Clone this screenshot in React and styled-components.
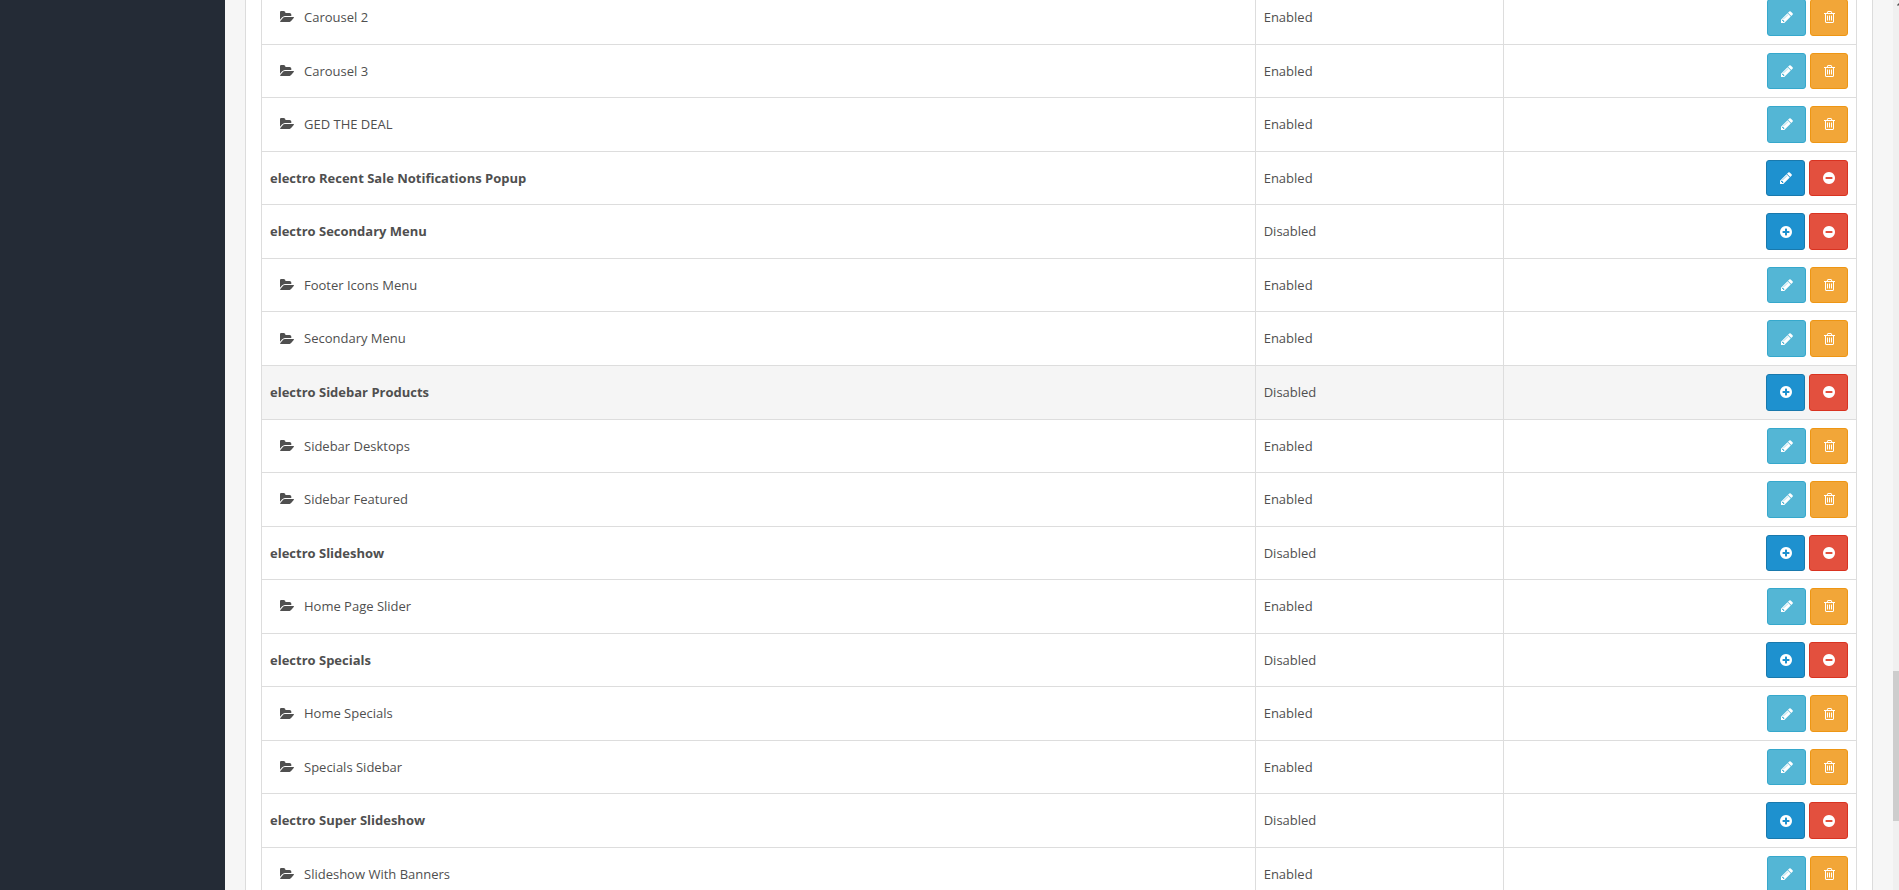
import React from 'react';
import styled, { createGlobalStyle, css } from 'styled-components';

// --- Colors and global styles ---
const colors = {
  sidebar: '#242b36',
  page: '#f6f6f6',
  panel: '#ffffff',
  border: '#dddddd',
  panelBorder: '#dcdcdc',
  text: '#4f4f4f',
  highlight: '#f5f5f5',
  track: '#f0f0f0',
  thumb: '#cdcdcd',
};

const variants = {
  primary: { background: '#1e91cf', border: '#1979ad', width: 39 },
  info: { background: '#54b6d5', border: '#36a8cc', width: 39 },
  warning: { background: '#f2a638', border: '#ee9614', width: 38 },
  danger: { background: '#e3503e', border: '#d93321', width: 39 },
};

const GlobalStyle = createGlobalStyle`
  *, *::before, *::after {
    box-sizing: border-box;
  }

  body {
    margin: 0;
    font-family: 'Open Sans', sans-serif;
    font-size: 13px;
    line-height: 1.42857;
    color: ${colors.text};
    background-color: ${colors.page};
  }
`;

const Page = styled.div`
  display: flex;
  height: 100vh;
  overflow: hidden;
`;

const Sidebar = styled.nav`
  flex: 0 0 225px;
  background-color: ${colors.sidebar};
`;

const Content = styled.main`
  flex: 1;
  min-width: 0;
  padding: 0 20px;
`;

/* the list is scrolled part of the way into its first row */
const Panel = styled.section`
  margin-top: -26px;
  padding: 15px;
  background-color: ${colors.panel};
  border: 1px solid ${colors.panelBorder};
`;

const StyledTable = styled.table`
  width: 100%;
  table-layout: fixed;
  border-collapse: collapse;
`;

const NameColumn = styled.col`
  width: 62.3%;
`;

const StatusColumn = styled.col`
  width: 15.6%;
`;

const TableRow = styled.tr`
  background-color: ${({ $active }) => ($active ? colors.highlight : 'transparent')};
`;

const TableCell = styled.td`
  padding: 8px;
  vertical-align: middle;
  border: 1px solid ${colors.border};
`;

const GroupName = styled.strong`
  font-weight: 700;
`;

const ModuleName = styled.span`
  display: flex;
  align-items: center;
  gap: 10px;
  padding-left: 10px;
`;

const Actions = styled.div`
  display: flex;
  justify-content: flex-end;
  gap: 4px;
`;

const buttonStyle = css`
  display: inline-flex;
  align-items: center;
  justify-content: center;
  width: ${({ $variant }) => variants[$variant].width}px;
  padding: 8px 0;
  font: inherit;
  color: #fff;
  text-decoration: none;
  border: 1px solid ${({ $variant }) => variants[$variant].border};
  border-radius: 3px;
  background-color: ${({ $variant }) => variants[$variant].background};
  cursor: pointer;

  /* keeps the text line height for icon-only buttons */
  &::before {
    content: '\\200b';
  }
`;

const ActionLink = styled.a`
  ${buttonStyle}
`;

const ActionButton = styled.button`
  ${buttonStyle}
`;

const Glyph = styled.svg`
  display: block;
  flex: none;
  fill: currentColor;
`;

const ScrollTrack = styled.div`
  flex: 0 0 6px;
  display: grid;
  grid-template-rows: 671fr 150fr 69fr;
  overflow: hidden;
  background-color: ${colors.track};
`;

const ScrollThumb = styled.div`
  grid-row: 2;
  background-color: ${colors.thumb};
`;

const ScrollArrow = styled.svg`
  grid-row: 1;
  fill: #505050;
`;

// --- Icons ---
const circle =
  'm320-64q0 209-103 385.5t-279.5 279.5-385.5 103-385.5-103-279.5-279.5-103-385.5 103-385.5 279.5-279.5 385.5-103 385.5 103 279.5 279.5 103 385.5z';

const icons = {
  pencil: {
    width: 12,
    viewBox: '128 0 1536 1792',
    path: 'M491 1536l91-91-235-235-91 91v107h128v128h107zm523-928q0-22-22-22-10 0-17 7l-542 542q-7 7-7 17 0 22 22 22 10 0 17-7l542-542q7-7 7-17zm-54-192l416 416-832 832h-416v-416zm683 96q0 53-37 90l-166 166-416-416 166-165q36-38 90-38 53 0 91 38l235 234q37 39 37 91z',
  },
  trash: {
    width: 11,
    viewBox: '192 0 1408 1792',
    path: 'M704 736v576q0 14-9 23t-23 9h-64q-14 0-23-9t-9-23v-576q0-14 9-23t23-9h64q14 0 23 9t9 23zm256 0v576q0 14-9 23t-23 9h-64q-14 0-23-9t-9-23v-576q0-14 9-23t23-9h64q14 0 23 9t9 23zm256 0v576q0 14-9 23t-23 9h-64q-14 0-23-9t-9-23v-576q0-14 9-23t23-9h64q14 0 23 9t9 23zm128 724v-948h-896v948q0 22 7 40.5t14.5 27 10.5 8.5h832q3 0 10.5-8.5t14.5-27 7-40.5zm-672-1076h448l-48-117q-7-9-17-11h-317q-10 2-17 11zm928 32v64q0 14-9 23t-23 9h-96v948q0 83-47 143.5t-113 60.5h-832q-66 0-113-58.5t-47-141.5v-952h-96q-14 0-23-9t-9-23v-64q0-14 9-23t23-9h309l70-167q15-37 54-63t79-26h320q40 0 79 26t54 63l70 167h309q14 0 23 9t9 23z',
  },
  plus: {
    width: 12,
    viewBox: '128 0 1536 1792',
    path: `M1344 960v-128q0-26-19-45t-45-19h-256v-256q0-26-19-45t-45-19h-128q-26 0-45 19t-19 45v256h-256q-26 0-45 19t-19 45v128q0 26 19 45t45 19h256v256q0 26 19 45t45 19h128q26 0 45-19t19-45v-256h256q26 0 45-19t19-45z${circle}`,
  },
  minus: {
    width: 12,
    viewBox: '128 0 1536 1792',
    path: `M1344 960v-128q0-26-19-45t-45-19h-768q-26 0-45 19t-19 45v128q0 26 19 45t45 19h768q26 0 45-19t19-45z${circle}`,
  },
  folder: {
    width: 14,
    viewBox: '0 0 1824 1792',
    path: 'M1815 952q0 31-31 66l-336 396q-43 51-120.5 86.5t-143.5 35.5h-1088q-34 0-60.5-13t-26.5-43q0-31 31-66l336-396q43-51 120.5-86.5t143.5-35.5h1088q34 0 60.5 13t26.5 43zm-343-344v160h-832q-94 0-197 47.5t-164 119.5l-337 396-5 6q0-4-.5-12.5t-.5-12.5v-960q0-92 66-158t158-66h320q92 0 158 66t66 158v32h544q92 0 158 66t66 158z',
  },
};

function Icon({ name }) {
  const { width, viewBox, path } = icons[name];
  return (
    <Glyph width={width} height={14} viewBox={viewBox} aria-hidden="true">
      <path d={path} />
    </Glyph>
  );
}

// --- Data ---
const modules = [
  { name: 'Carousel 2', status: 'Enabled' },
  { name: 'Carousel 3', status: 'Enabled' },
  { name: 'GED THE DEAL', status: 'Enabled' },
  { name: 'electro Recent Sale Notifications Popup', status: 'Enabled', group: true, action: 'pencil' },
  { name: 'electro Secondary Menu', status: 'Disabled', group: true, action: 'plus' },
  { name: 'Footer Icons Menu', status: 'Enabled' },
  { name: 'Secondary Menu', status: 'Enabled' },
  { name: 'electro Sidebar Products', status: 'Disabled', group: true, action: 'plus', active: true },
  { name: 'Sidebar Desktops', status: 'Enabled' },
  { name: 'Sidebar Featured', status: 'Enabled' },
  { name: 'electro Slideshow', status: 'Disabled', group: true, action: 'plus' },
  { name: 'Home Page Slider', status: 'Enabled' },
  { name: 'electro Specials', status: 'Disabled', group: true, action: 'plus' },
  { name: 'Home Specials', status: 'Enabled' },
  { name: 'Specials Sidebar', status: 'Enabled' },
  { name: 'electro Super Slideshow', status: 'Disabled', group: true, action: 'plus' },
  { name: 'Slideshow With Banners', status: 'Enabled' },
];

function ModuleRow({ module }) {
  const { name, status, group, action, active } = module;

  return (
    <TableRow $active={active}>
      <TableCell>
        {group ? (
          <GroupName>{name}</GroupName>
        ) : (
          <ModuleName>
            <Icon name="folder" />
            {name}
          </ModuleName>
        )}
      </TableCell>
      <TableCell>{status}</TableCell>
      <TableCell>
        <Actions>
          <ActionLink
            href="#edit"
            $variant={group ? 'primary' : 'info'}
            aria-label={`${action === 'plus' ? 'Add' : 'Edit'} ${name}`}
          >
            <Icon name={group ? action : 'pencil'} />
          </ActionLink>
          <ActionButton
            type="button"
            $variant={group ? 'danger' : 'warning'}
            aria-label={`${group ? 'Uninstall' : 'Delete'} ${name}`}
          >
            <Icon name={group ? 'minus' : 'trash'} />
          </ActionButton>
        </Actions>
      </TableCell>
    </TableRow>
  );
}

export default function App() {
  return (
    <>
      <GlobalStyle />
      <Page>
        <Sidebar />
        <Content>
          <Panel>
            <StyledTable>
              <colgroup>
                <NameColumn />
                <StatusColumn />
                <col />
              </colgroup>
              <tbody>
                {modules.map((module) => (
                  <ModuleRow key={module.name} module={module} />
                ))}
              </tbody>
            </StyledTable>
          </Panel>
        </Content>
        <ScrollTrack>
          <ScrollArrow width="9" height="8" viewBox="0 0 9 8" aria-hidden="true">
            <path d="M4 5l4-4 4 4-1 1-3-3-3 3z" />
          </ScrollArrow>
          <ScrollThumb />
        </ScrollTrack>
      </Page>
    </>
  );
}
